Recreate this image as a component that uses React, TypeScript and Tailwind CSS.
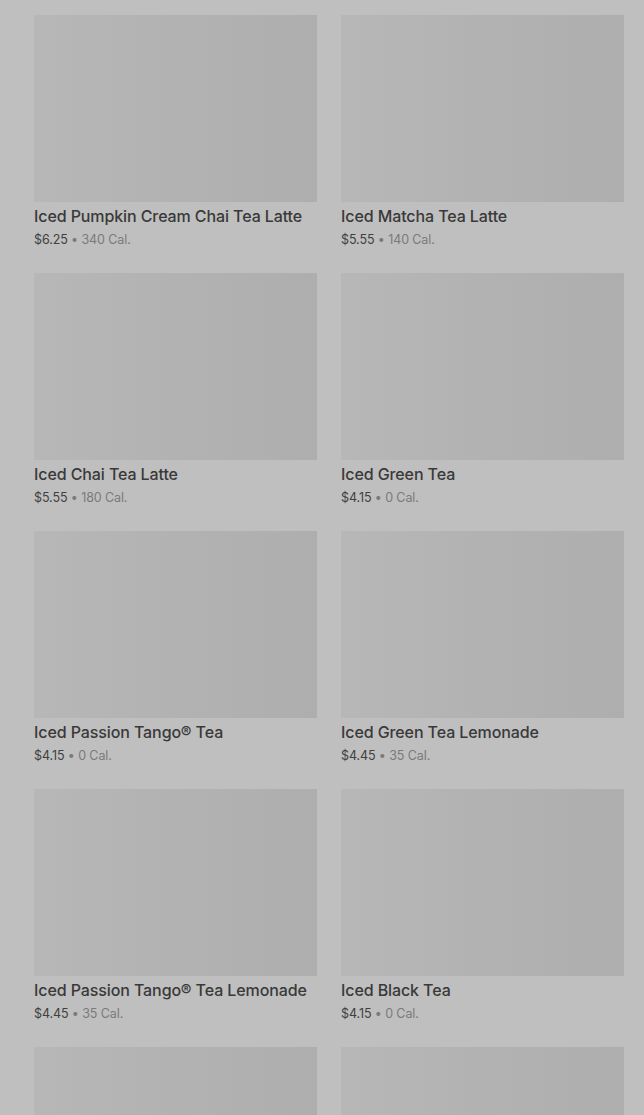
const ITEMS = [
  { name: "Iced Pumpkin Cream Chai Tea Latte", price: "$6.25", cal: "340 Cal." },
  { name: "Iced Matcha Tea Latte", price: "$5.55", cal: "140 Cal." },
  { name: "Iced Chai Tea Latte", price: "$5.55", cal: "180 Cal." },
  { name: "Iced Green Tea", price: "$4.15", cal: "0 Cal." },
  { name: "Iced Passion Tango® Tea", price: "$4.15", cal: "0 Cal." },
  { name: "Iced Green Tea Lemonade", price: "$4.45", cal: "35 Cal." },
  { name: "Iced Passion Tango® Tea Lemonade", price: "$4.45", cal: "35 Cal." },
  { name: "Iced Black Tea", price: "$4.15", cal: "0 Cal." },
];

function Thumb() {
  return <div className="h-[187px] bg-gradient-to-r from-[#b7b7b7] via-[#b2b2b2] to-[#aeaeae]" />;
}

export default function App() {
  return (
    <main className="h-[1115px] overflow-hidden bg-[#bfbfbf] font-['Inter',sans-serif]">
      <div className="grid grid-cols-2 gap-x-6 gap-y-6 pl-[34px] pr-5 pt-[15px]">
        {ITEMS.map((item, i) => (
          <div key={i}>
            <Thumb />
            <p className="mt-1 text-[16px] leading-5 font-medium text-[#393939] tracking-[-0.1px] whitespace-nowrap">
              {item.name}
            </p>
            <p className="mt-[5px] text-[12.5px] leading-[18px] tracking-[-0.1px]">
              <span className="text-[#404040]">{item.price}</span>
              <span className="text-[#7a7a7a]"> • {item.cal}</span>
            </p>
          </div>
        ))}
        {/* next row, only the images are in view */}
        <Thumb />
        <Thumb />
      </div>
    </main>
  );
}
